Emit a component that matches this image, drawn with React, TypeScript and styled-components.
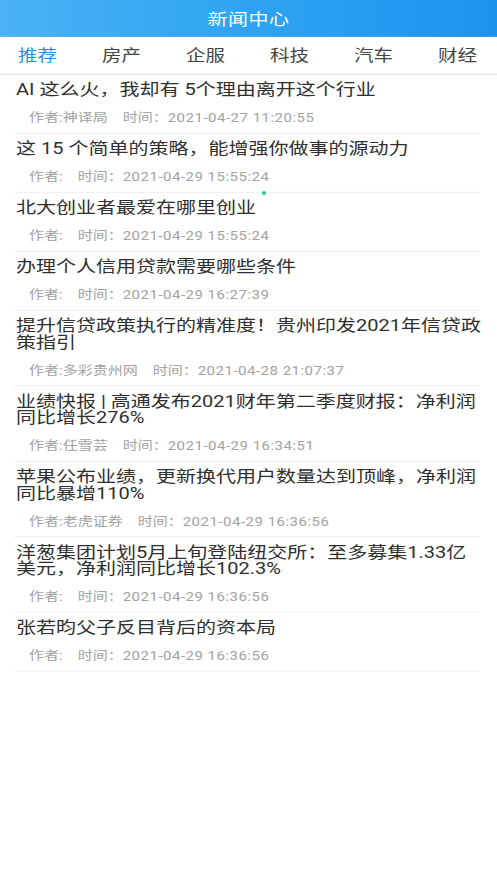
import * as React from "react";
import styled, { createGlobalStyle } from "styled-components";

// the reference capture is squashed vertically (~0.82), so the page is laid out
// at natural proportions and compressed once at the root
const SQUASH = 0.82;

const GlobalStyle = createGlobalStyle`
  html, body {
    margin: 0;
    padding: 0;
    background: #ffffff;
    overflow: hidden;
  }
  body {
    font-family: Roboto, "Noto Sans CJK SC", sans-serif;
  }
`;

const Viewport = styled.div`
  width: 497px;
  height: 883px;
  overflow: hidden;
  background: #ffffff;
`;

const Page = styled.div`
  position: relative;
  width: 497px;
  min-height: ${Math.ceil(883 / SQUASH)}px;
  background: #ffffff;
  transform: scaleY(${SQUASH});
  transform-origin: top left;
`;

const TopBar = styled.div`
  height: 45px;
  display: flex;
  align-items: center;
  justify-content: center;
  background: linear-gradient(90deg, #4ab2f6 0%, #2fa3f2 50%, #1b94ee 100%);
  color: #ffffff;
  font-size: 20px;
  letter-spacing: 0.5px;
`;

const TabBar = styled.div`
  height: 45px;
  display: flex;
  align-items: center;
  gap: 45px;
  padding-left: 18px;
  border-bottom: 1px solid #d8d8d8;
  box-shadow: 0 1px 2px rgba(0, 0, 0, 0.05);
  white-space: nowrap;
  overflow: hidden;
`;

const Tab = styled.div<{ $active?: boolean }>`
  font-size: 19.5px;
  line-height: 24px;
  color: ${(p) => (p.$active ? "#2a8fe3" : "#454545")};
  flex: none;
`;

const List = styled.div`
  display: flex;
  flex-direction: column;
`;

const Item = styled.div`
  margin: 0 17px 0 14px;
  padding: 8px 0 7px;
  border-bottom: 1px solid #ebebeb;
`;

const Title = styled.div`
  margin-right: -3px;
  padding-left: 2px;
  font-size: 20px;
  line-height: 20px;
  color: #2f2f2f;
`;

const Meta = styled.div`
  display: flex;
  gap: 15px;
  margin-top: 14px;
  padding-left: 15px;
  font-size: 15px;
  line-height: 22px;
  color: #a2a2a2;
`;

const DateText = styled.span`
  letter-spacing: 0.5px;
`;

const Dot = styled.span`
  position: absolute;
  left: 262px;
  top: 233px;
  width: 4px;
  height: 5px;
  border-radius: 50%;
  background: #27c79a;
`;

interface INews {
  title: string;
  author: string;
  time: string;
}

const tabs = ["推荐", "房产", "企服", "科技", "汽车", "财经"];

const news: INews[] = [
  { title: "AI 这么火，我却有 5个理由离开这个行业", author: "神译局", time: "2021-04-27 11:20:55" },
  { title: "这 15 个简单的策略，能增强你做事的源动力", author: "", time: "2021-04-29 15:55:24" },
  { title: "北大创业者最爱在哪里创业", author: "", time: "2021-04-29 15:55:24" },
  { title: "办理个人信用贷款需要哪些条件", author: "", time: "2021-04-29 16:27:39" },
  { title: "提升信贷政策执行的精准度！贵州印发2021年信贷政策指引", author: "多彩贵州网", time: "2021-04-28 21:07:37" },
  { title: "业绩快报 | 高通发布2021财年第二季度财报：净利润同比增长276%", author: "任雪芸", time: "2021-04-29 16:34:51" },
  { title: "苹果公布业绩，更新换代用户数量达到顶峰，净利润同比暴增110%", author: "老虎证券", time: "2021-04-29 16:36:56" },
  { title: "洋葱集团计划5月上旬登陆纽交所：至多募集1.33亿美元，净利润同比增长102.3%", author: "", time: "2021-04-29 16:36:56" },
  { title: "张若昀父子反目背后的资本局", author: "", time: "2021-04-29 16:36:56" },
];

const App: React.FunctionComponent = () => {
  return (
    <Viewport>
      <GlobalStyle />
      <Page>
        <TopBar>新闻中心</TopBar>
        <TabBar>
          {tabs.map((t, i) => (
            <Tab key={t} $active={i === 0}>
              {t}
            </Tab>
          ))}
        </TabBar>
        <List>
          {news.map((n, i) => (
            <Item key={i}>
              <Title>{n.title}</Title>
              <Meta>
                <span>作者:{n.author}</span>
                <span>
                  时间：<DateText>{n.time}</DateText>
                </span>
              </Meta>
            </Item>
          ))}
        </List>
        <Dot />
      </Page>
    </Viewport>
  );
};

export default App;
